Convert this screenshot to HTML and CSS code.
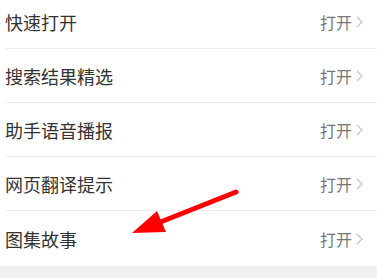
FILE: index.html
```html
<!DOCTYPE html>
<html lang="zh">
<head>
<meta charset="utf-8">
<link rel="stylesheet" href="styles.css">
</head>
<body>
<div class="page">
  <ul class="list">
    <li class="row"><span class="title">快速打开</span><span class="action">打开<svg class="chev" viewBox="0 0 7 12" width="7" height="12"><path d="M1 1 L6 6 L1 11" fill="none" stroke="#c4c4c4" stroke-width="1.2"/></svg></span></li>
    <li class="row"><span class="title">搜索结果精选</span><span class="action">打开<svg class="chev" viewBox="0 0 7 12" width="7" height="12"><path d="M1 1 L6 6 L1 11" fill="none" stroke="#c4c4c4" stroke-width="1.2"/></svg></span></li>
    <li class="row"><span class="title">助手语音播报</span><span class="action">打开<svg class="chev" viewBox="0 0 7 12" width="7" height="12"><path d="M1 1 L6 6 L1 11" fill="none" stroke="#c4c4c4" stroke-width="1.2"/></svg></span></li>
    <li class="row"><span class="title">网页翻译提示</span><span class="action">打开<svg class="chev" viewBox="0 0 7 12" width="7" height="12"><path d="M1 1 L6 6 L1 11" fill="none" stroke="#c4c4c4" stroke-width="1.2"/></svg></span></li>
    <li class="row"><span class="title">图集故事</span><span class="action">打开<svg class="chev" viewBox="0 0 7 12" width="7" height="12"><path d="M1 1 L6 6 L1 11" fill="none" stroke="#c4c4c4" stroke-width="1.2"/></svg></span></li>
  </ul>
  <div class="footer"></div>
  <svg class="arrow" viewBox="0 0 377 278" width="377" height="278">
    <line x1="236" y1="192" x2="158" y2="223" stroke="#ff0000" stroke-width="5" stroke-linecap="round"/>
    <polygon points="132,233 157,211 166,232" fill="#ff0000"/>
  </svg>
</div>
</body>
</html>
```
FILE: styles.css
```css
html, body {
  margin: 0;
  padding: 0;
  background: #ffffff;
}
.page {
  position: relative;
  width: 377px;
  height: 278px;
  overflow: hidden;
  font-family: "Noto Sans CJK SC", "Noto Sans", sans-serif;
}
.list {
  list-style: none;
  margin: -5px 0 0 0;
  padding: 0 0 0 5px;
  background: #ffffff;
}
.row {
  height: 53px;
  display: flex;
  align-items: center;
  justify-content: space-between;
  border-bottom: 1px solid #ededed;
  padding-right: 14px;
}
.row:last-child {
  border-bottom: none;
  height: 55px;
}
.title {
  font-size: 18px;
  color: #333333;
}
.action {
  display: flex;
  align-items: center;
  gap: 4px;
  font-size: 16px;
  color: #777777;
}
.chev {
  display: block;
}
.footer {
  height: 20px;
  background: #f0f0f0;
}
.arrow {
  position: absolute;
  left: 0;
  top: 0;
  pointer-events: none;
}
```
